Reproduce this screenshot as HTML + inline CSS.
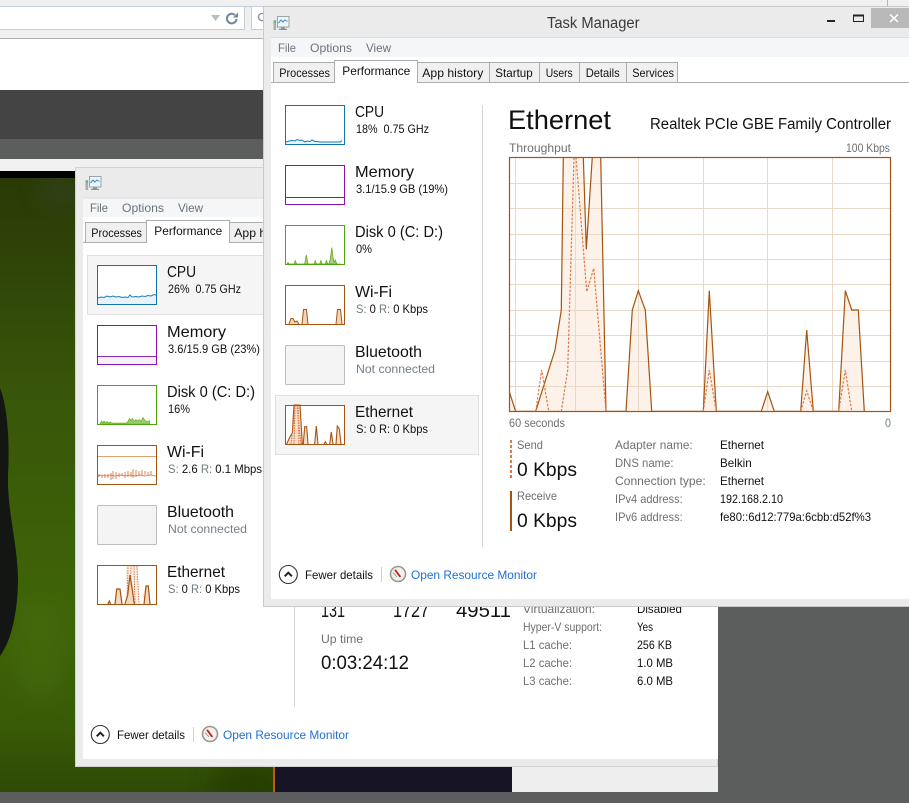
<!DOCTYPE html>
<html lang="en">
<head>
<meta charset="utf-8">
<title>Task Manager</title>
<style>
html,body{margin:0;padding:0;background:#5c5e5d;width:909px;height:803px;overflow:hidden}
svg{display:block;position:absolute;left:0;top:0}
text{font-family:"Liberation Sans",sans-serif;fill:#111}
.t{font-size:16px}
.s{font-size:12px}
.g{font-size:12px;fill:#6f6f6f}
.m{font-size:12px;fill:#6d7278}
.n{font-size:12px;fill:#71808c}
.l{font-size:12px;fill:#1f6fd6}
.b{font-size:19px}
</style>
</head>
<body>
<svg width="909" height="803" viewBox="0 0 909 803" xmlns="http://www.w3.org/2000/svg">
<defs>
<linearGradient id="gr" x1="0" y1="0" x2="0" y2="1">
<stop offset="0" stop-color="#2a3a06"/>
<stop offset=".12" stop-color="#2f4308"/>
<stop offset=".35" stop-color="#385609"/>
<stop offset=".7" stop-color="#3f6408"/>
<stop offset=".9" stop-color="#395a07"/>
<stop offset="1" stop-color="#2e4a06"/>
</linearGradient>
<filter id="bl" x="-50%" y="-50%" width="200%" height="200%"><feGaussianBlur stdDeviation="12"/></filter>
<g id="wicon">
<rect x="273.5" y="20" width="2.6" height="10" fill="#a9aeb0"/>
<rect x="273.8" y="21" width="2" height="2" fill="#5cc24a"/>
<rect x="277.5" y="16.5" width="11.5" height="10.5" fill="#eef5fa" stroke="#9aa4a9"/>
<path d="M278.5 23l2.5-3 2 2 2-2 2.5 1.5" fill="none" stroke="#2d8fd0" stroke-width="1"/>
<path d="M281 27.5h4v1.2h2v1.3h-8v-1.3h2z" fill="#8d9497"/>
</g>
<g id="chev">
<circle cx="0" cy="0" r="9" fill="#fff" stroke="#333" stroke-width="1.1"/>
<path d="M-3.6 1.8L0-1.8 3.6 1.8" fill="none" stroke="#222" stroke-width="2"/>
</g>
<g id="rmon">
<circle cx="0" cy="0" r="7.5" fill="#f2f1ee" stroke="#9a9890" stroke-width="1.6"/>
<path d="M-3-4.2L2.4 3" stroke="#c4201c" stroke-width="1.8"/>
<path d="M-5-1.5L-1 3" stroke="#8a8a8a" stroke-width=".8"/>
</g>
</defs>

<!-- browser behind -->
<rect width="909" height="803" fill="#5c5e5d"/>
<rect width="909" height="38" fill="#f0f0f0"/>
<rect x="0" y="6" width="602" height="1" fill="#c3cad0"/>
<rect x="887" y="0" width="1" height="7" fill="#b5b5b5"/>
<rect x="-2" y="6.5" width="246.5" height="23" fill="#fff" stroke="#c3ced8"/>
<rect x="251.5" y="6.5" width="30" height="23" fill="#fff" stroke="#c3ced8"/>
<path d="M211 15h9l-4.5 6z" fill="#b4bcc4"/>
<path d="M236.5 19a4.8 4.8 0 1 1-1.6-4" fill="none" stroke="#73859a" stroke-width="2"/>
<path d="M238 12.5v5h-5z" fill="#73859a"/>
<circle cx="262" cy="17" r="3.6" fill="none" stroke="#8a98a6" stroke-width="1.4"/>
<rect y="38" width="909" height="1" fill="#aeb0b0"/>
<rect y="39" width="909" height="51" fill="#fff"/>
<rect y="90" width="909" height="49" fill="#444"/>
<rect y="139" width="909" height="20" fill="#5c5e5d"/>
<rect y="159" width="909" height="12" fill="#f0f0f0"/>
<rect y="171" width="80" height="7" fill="#000"/>
<rect y="178" width="273" height="614" fill="url(#gr)"/>
<clipPath id="gc"><rect y="178" width="273" height="614"/></clipPath>
<g clip-path="url(#gc)">
<ellipse cx="62" cy="190" rx="22" ry="14" fill="#39462a" opacity=".6" filter="url(#bl)"/>
<ellipse cx="40" cy="650" rx="26" ry="50" fill="#466e08" opacity=".5" filter="url(#bl)"/>
<ellipse cx="250" cy="785" rx="40" ry="20" fill="#223804" opacity=".7" filter="url(#bl)"/>
</g>
<path d="M0 388C7 405 10 440 8 475C7 510 17 540 18 578C18 610 12 640 0 656Z" fill="#141614"/>
<rect x="273" y="767" width="2" height="25" fill="#c45a12"/>
<rect x="275" y="767" width="237" height="25" fill="#171525"/>
<rect x="512" y="767" width="206" height="25" fill="#eeeeee"/>

<!-- BACK WINDOW -->
<rect x="75.5" y="167.5" width="642" height="599" fill="#ebebeb" stroke="#d2d2d2"/>
<rect x="83" y="198" width="635" height="561" fill="#fff"/>
<rect x="83" y="198" width="635" height="19" fill="#f5f6f7"/>
<rect x="83" y="197.500" width="635" height="1" fill="#dedede"/>
<use href="#wicon" transform="translate(-188 160)"/>
<text class="m" x="90" y="212" textLength="18" lengthAdjust="spacingAndGlyphs">File</text>
<text class="m" x="122" y="212" textLength="42" lengthAdjust="spacingAndGlyphs">Options</text>
<text class="m" x="178" y="212" textLength="25" lengthAdjust="spacingAndGlyphs">View</text>
<rect x="83" y="242" width="635" height="1" fill="#adadad"/>
<rect x="85.500" y="222.500" width="61" height="20" fill="#f0f0f0" stroke="#adadad"/>
<rect x="229.500" y="222.500" width="70" height="20" fill="#f0f0f0" stroke="#adadad"/>
<rect x="146.500" y="220.500" width="83" height="22" fill="#fff" stroke="#adadad"/>
<rect x="147" y="241" width="82" height="3" fill="#fff"/>
<text class="s" x="91.300" y="237" textLength="50.700" lengthAdjust="spacingAndGlyphs">Processes</text>
<text class="s" x="154.300" y="235" textLength="68" lengthAdjust="spacingAndGlyphs">Performance</text>
<text class="s" x="234.300" y="237" textLength="61" lengthAdjust="spacingAndGlyphs">App history</text>
<rect x="87.500" y="255.500" width="190" height="59" fill="#f5f5f5" stroke="#e0e0e0"/>

<!-- back thumbs -->
<rect x="97.500" y="265.500" width="59" height="39" fill="#fff"/>
<path d="M98 298l3-1 3 .5 3-1.500 3 1 3-1 3 1 3-.5 3 1 3-.5 3 .5 2-2.500 2 2 4-.5 3 .5 3-1 3 .5 3-1 3 .5 3-1.500 2 .5V304H98z" fill="#e8f2f9" stroke="none"/>
<path d="M98 298l3-1 3 .5 3-1.500 3 1 3-1 3 1 3-.5 3 1 3-.5 3 .5 2-2.500 2 2 4-.5 3 .5 3-1 3 .5 3-1 3 .5 3-1.500 2 .5" fill="none" stroke="#1d7cb5"/>
<rect x="97.500" y="265.500" width="59" height="39" fill="none" stroke="#1174b0" stroke-width="1"/>
<rect x="97.500" y="325.500" width="59" height="39" fill="#fff"/>
<rect x="98" y="356" width="58" height="8" fill="#f5f0f7"/>
<rect x="98" y="356" width="58" height="1" fill="#8b2aa8"/>
<rect x="97.500" y="325.500" width="59" height="39" fill="none" stroke="#8b12ae"/>
<rect x="97.500" y="385.500" width="59" height="39" fill="#fff"/>
<path d="M100 424l1.500-3 1.500 2 1-2 1.500 2 1.500-1.500 1.500 1.500 1.500-1 1.500 1h6l1 0 3 0 5 0 1.500-1.500 1.500-3 1.500 2 1.500-2 1.500 3 2-2 1.500 1.500 2-1.500 1.500 2 2-4 2 3 2 1 1.500-.5 1-.5V424z" fill="#9ecb6e" stroke="#5ba60f" stroke-width=".6"/>
<rect x="97.500" y="385.500" width="59" height="39" fill="none" stroke="#4da60c"/>
<rect x="97.500" y="445.500" width="59" height="39" fill="#fff"/>
<rect x="98" y="456" width="58" height="1" fill="#d9a470"/>
<path d="M99 477v-3m3 4v-3m3 3v-4m3 4v-4m3 6v-7m2 6v-8m3 8v-7m3 5v-4m3 3v-3m3 5v-6m3 5v-6m3 6v-5m2 6v-9m3 8v-7m3 6v-5m3 5v-6m3 5v-4m3 4v-3m3 3v-4" stroke="#dd8550" stroke-width="1" fill="none"/>
<path d="M98 476l4-1 4 1 4-1 5 1 5-1 5 1 5-1 5 1 5-1 5 1 5-1 6 1" stroke="#c47a40" fill="none" stroke-width=".8"/>
<rect x="97.500" y="445.500" width="59" height="39" fill="none" stroke="#a5540e"/>
<rect x="97.500" y="505.500" width="59" height="39" rx="1" fill="#f4f4f4" stroke="#bdbdbd"/>
<rect x="97.500" y="565.500" width="59" height="39" fill="#fff"/>
<path d="M126 604.500V566h12v38.500z" fill="#fbeee3"/>
<path d="M127 604l1-38M137 566l2 38M130 604l1-38M134 566l1 38" fill="none" stroke="#dd7a48" stroke-dasharray="1.500 1"/>
<path d="M108 604l1.300-3 1.300 3M115 604l1.700-15h3.300l2 15M125 604l2.700-9 2.300-20 2.300 15 2 14M144 604l2-18h2.300l1.700 18" fill="#f3d9c2" stroke="#a5540e" stroke-width="1.200"/>
<rect x="97.500" y="565.500" width="59" height="39" fill="none" stroke="#a5540e"/>

<!-- back labels -->
<text class="t" x="167" y="277" textLength="29" lengthAdjust="spacingAndGlyphs">CPU</text>
<text class="s" x="168" y="293" textLength="73" lengthAdjust="spacingAndGlyphs">26%&#160; 0.75 GHz</text>
<text class="t" x="167" y="337" textLength="59" lengthAdjust="spacingAndGlyphs">Memory</text>
<text class="s" x="168" y="353" textLength="92" lengthAdjust="spacingAndGlyphs">3.6/15.9 GB (23%)</text>
<text class="t" x="167" y="397" textLength="88" lengthAdjust="spacingAndGlyphs">Disk 0 (C: D:)</text>
<text class="s" x="168" y="413" textLength="22" lengthAdjust="spacingAndGlyphs">16%</text>
<text class="t" x="167" y="457" textLength="37" lengthAdjust="spacingAndGlyphs">Wi-Fi</text>
<text class="s" x="168" y="473" textLength="94" lengthAdjust="spacingAndGlyphs"><tspan style="fill:#6f7a80">S:</tspan> 2.6 <tspan style="fill:#6f7a80">R:</tspan> 0.1 Mbps</text>
<text class="t" x="167" y="517" textLength="67" lengthAdjust="spacingAndGlyphs">Bluetooth</text>
<text class="n" x="168" y="533" textLength="79" lengthAdjust="spacingAndGlyphs">Not connected</text>
<text class="t" x="167" y="577" textLength="58" lengthAdjust="spacingAndGlyphs">Ethernet</text>
<text class="s" x="168" y="593" textLength="72" lengthAdjust="spacingAndGlyphs"><tspan style="fill:#6f7a80">S:</tspan> 0 <tspan style="fill:#6f7a80">R:</tspan> 0 Kbps</text>

<rect x="294" y="590" width="1" height="117" fill="#d4d4d4"/>
<text class="b" x="321" y="617" textLength="24" lengthAdjust="spacingAndGlyphs">131</text>
<text class="b" x="393" y="617" textLength="36" lengthAdjust="spacingAndGlyphs">1727</text>
<text class="b" x="456" y="617" textLength="55" lengthAdjust="spacingAndGlyphs">49511</text>
<text class="g" x="321" y="643" textLength="42" lengthAdjust="spacingAndGlyphs">Up time</text>
<text class="b" x="321" y="669" textLength="88" lengthAdjust="spacingAndGlyphs">0:03:24:12</text>
<text class="g" x="523" y="613" textLength="72" lengthAdjust="spacingAndGlyphs">Virtualization:</text>
<text class="s" x="637" y="613" textLength="45" lengthAdjust="spacingAndGlyphs">Disabled</text>
<text class="g" x="523" y="631" textLength="79" lengthAdjust="spacingAndGlyphs">Hyper-V support:</text>
<text class="s" x="637" y="631" textLength="16" lengthAdjust="spacingAndGlyphs">Yes</text>
<text class="g" x="523" y="649" textLength="49" lengthAdjust="spacingAndGlyphs">L1 cache:</text>
<text class="s" x="637" y="649" textLength="35" lengthAdjust="spacingAndGlyphs">256 KB</text>
<text class="g" x="523" y="667" textLength="49" lengthAdjust="spacingAndGlyphs">L2 cache:</text>
<text class="s" x="637" y="667" textLength="36" lengthAdjust="spacingAndGlyphs">1.0 MB</text>
<text class="g" x="523" y="685" textLength="49" lengthAdjust="spacingAndGlyphs">L3 cache:</text>
<text class="s" x="637" y="685" textLength="36" lengthAdjust="spacingAndGlyphs">6.0 MB</text>

<use href="#chev" transform="translate(100.300 734.500)"/>
<text class="s" x="117" y="739" textLength="68" lengthAdjust="spacingAndGlyphs">Fewer details</text>
<rect x="193" y="727" width="1" height="15" fill="#cfcfcf"/>
<use href="#rmon" transform="translate(210 734)"/>
<text class="l" x="223" y="739" textLength="126" lengthAdjust="spacingAndGlyphs">Open Resource Monitor</text>

<!-- FRONT WINDOW -->
<rect x="263.500" y="6.500" width="660" height="600" fill="#ebebeb" stroke="#cacaca"/>
<rect x="271" y="38" width="640" height="561" fill="#fff"/>
<rect x="271" y="38" width="640" height="19" fill="#f5f6f7"/>
<rect x="271" y="37" width="640" height="1" fill="#dedede"/>
<use href="#wicon"/>
<text x="547" y="28" style="font-size:15.500px;fill:#3a3a3a" textLength="92.500" lengthAdjust="spacingAndGlyphs">Task Manager</text>
<rect x="827" y="20" width="8" height="2" fill="#222"/>
<rect x="853.500" y="15.500" width="10" height="6" fill="none" stroke="#222"/>
<rect x="853" y="14.500" width="11" height="2" fill="#222"/>
<rect x="871" y="8" width="38" height="20" fill="#b9b9b9"/>
<path d="M890 14.500l8 7.500m0-7.500l-8 7.500" stroke="#fff" stroke-width="1.500"/>
<text class="m" x="278" y="52" textLength="18" lengthAdjust="spacingAndGlyphs">File</text>
<text class="m" x="310" y="52" textLength="42" lengthAdjust="spacingAndGlyphs">Options</text>
<text class="m" x="366" y="52" textLength="25" lengthAdjust="spacingAndGlyphs">View</text>

<rect x="271" y="82" width="640" height="1" fill="#adadad"/>
<rect x="273.500" y="62.500" width="61" height="20" fill="#f0f0f0" stroke="#adadad"/>
<rect x="417.500" y="62.500" width="72" height="20" fill="#f0f0f0" stroke="#adadad"/>
<rect x="489.500" y="62.500" width="50" height="20" fill="#f0f0f0" stroke="#adadad"/>
<rect x="539.500" y="62.500" width="40" height="20" fill="#f0f0f0" stroke="#adadad"/>
<rect x="579.500" y="62.500" width="47" height="20" fill="#f0f0f0" stroke="#adadad"/>
<rect x="626.500" y="62.500" width="51" height="20" fill="#f0f0f0" stroke="#adadad"/>
<rect x="334.500" y="60.500" width="83" height="22" fill="#fff" stroke="#adadad"/>
<rect x="335" y="81" width="82" height="3" fill="#fff"/>
<text class="s" x="279.300" y="77" textLength="50.700" lengthAdjust="spacingAndGlyphs">Processes</text>
<text class="s" x="342.300" y="75" textLength="68" lengthAdjust="spacingAndGlyphs">Performance</text>
<text class="s" x="422.300" y="77" textLength="61" lengthAdjust="spacingAndGlyphs">App history</text>
<text class="s" x="495.300" y="77" textLength="37.400" lengthAdjust="spacingAndGlyphs">Startup</text>
<text class="s" x="545.700" y="77" textLength="27" lengthAdjust="spacingAndGlyphs">Users</text>
<text class="s" x="585.700" y="77" textLength="34" lengthAdjust="spacingAndGlyphs">Details</text>
<text class="s" x="632.300" y="77" textLength="41.700" lengthAdjust="spacingAndGlyphs">Services</text>

<!-- front sidebar -->
<rect x="275.500" y="395.500" width="203" height="59" fill="#f5f5f5" stroke="#e0e0e0"/>
<rect x="482" y="105" width="1" height="442" fill="#d6d6d6"/>

<rect x="285.500" y="105.500" width="59" height="39" fill="#fff"/>
<path d="M286 142l3-1 3-.5 3 .5 2-1.500 3 1 2-.5 3 2 2-1 3 .5 2-1.500 3 1.500 2 0 3 .5 20 0 2-1.500V144H286z" fill="#e8f2f9"/>
<path d="M286 142l3-1 3-.5 3 .5 2-1.500 3 1 2-.5 3 2 2-1 3 .5 2-1.500 3 1.500 2 0 3 .5 20 0 2-1.500" fill="none" stroke="#1d7cb5"/>
<rect x="285.500" y="105.500" width="59" height="39" fill="none" stroke="#1174b0"/>
<rect x="285.500" y="165.500" width="59" height="39" fill="#fff"/>
<rect x="286" y="197" width="58" height="1" fill="#8b12ae"/>
<rect x="285.500" y="165.500" width="59" height="39" fill="none" stroke="#8b12ae"/>
<rect x="285.500" y="225.500" width="59" height="39" fill="#fff"/>
<path d="M287 264l1-1.500 1 1.500 5 0 1.300-3.500 1.300 3.500h8l1.700-9 1.700 9h6l1.300-3.500 1.300 3.500h3l1.300-3.500 1.300 3.500h3l1.300-3.500 1.300 3.500h1l1.500-5 1.500-11.500 1.500 12 1 3 1-2.500 1.500 4h4z" fill="#a8d07c" stroke="#5ba60f" stroke-width=".7"/>
<rect x="285.500" y="225.500" width="59" height="39" fill="none" stroke="#4da60c"/>
<rect x="285.500" y="285.500" width="59" height="39" fill="#fff"/>
<path d="M289 324l2-5.500h2l2 3.500 2-1 2 3M302 324l1.500-14.500h3L308 324M336 324l1.500-14.500h3L342 324" fill="#f0d4bc" stroke="#a5540e"/>
<rect x="285.500" y="285.500" width="59" height="39" fill="none" stroke="#a5540e"/>
<rect x="285.500" y="345.500" width="59" height="39" rx="1" fill="#f4f4f4" stroke="#bdbdbd"/>
<rect x="285.500" y="405.500" width="59" height="39" fill="#fff"/>
<path d="M286.700 444l3.300-7.300 2.300-3.700 1.700-28h6l2.300 39M303.300 444l1.400-17.300h2l1.300 17.300M314.700 444l1.600-18 1.700 18M324 444l1.300-2.300 1.400 2.300M329.700 444l1.600-12 1.700 12M336 444l1.300-18 2 3 1.700 15" fill="#f5dfcc" stroke="#a5540e" stroke-width="1.100"/>
<path d="M291 444l3-26 1-13M297 405l2 20 2 19M294 444l1-39M298 405l1 39" fill="none" stroke="#dd6a38" stroke-dasharray="1.500 1"/>
<rect x="285.500" y="405.500" width="59" height="39" fill="none" stroke="#a5540e"/>

<text class="t" x="355" y="117" textLength="29" lengthAdjust="spacingAndGlyphs">CPU</text>
<text class="s" x="356" y="133" textLength="73" lengthAdjust="spacingAndGlyphs">18%&#160; 0.75 GHz</text>
<text class="t" x="355" y="177" textLength="59" lengthAdjust="spacingAndGlyphs">Memory</text>
<text class="s" x="356" y="193" textLength="92" lengthAdjust="spacingAndGlyphs">3.1/15.9 GB (19%)</text>
<text class="t" x="355" y="237" textLength="88" lengthAdjust="spacingAndGlyphs">Disk 0 (C: D:)</text>
<text class="s" x="356" y="253" textLength="16" lengthAdjust="spacingAndGlyphs">0%</text>
<text class="t" x="355" y="297" textLength="37" lengthAdjust="spacingAndGlyphs">Wi-Fi</text>
<text class="s" x="356" y="313" textLength="72" lengthAdjust="spacingAndGlyphs"><tspan style="fill:#6f7a80">S:</tspan> 0 <tspan style="fill:#6f7a80">R:</tspan> 0 Kbps</text>
<text class="t" x="355" y="357" textLength="67" lengthAdjust="spacingAndGlyphs">Bluetooth</text>
<text class="n" x="356" y="373" textLength="79" lengthAdjust="spacingAndGlyphs">Not connected</text>
<text class="t" x="355" y="417" textLength="58" lengthAdjust="spacingAndGlyphs">Ethernet</text>
<text class="s" x="356" y="433" textLength="72" lengthAdjust="spacingAndGlyphs">S: 0 R: 0 Kbps</text>

<!-- main panel -->
<text x="508" y="129" style="font-size:27px" textLength="103" lengthAdjust="spacingAndGlyphs">Ethernet</text>
<text x="650" y="129" style="font-size:15.500px" textLength="241" lengthAdjust="spacingAndGlyphs">Realtek PCIe GBE Family Controller</text>
<text class="g" x="509" y="152" textLength="62" lengthAdjust="spacingAndGlyphs">Throughput</text>
<text class="g" x="846" y="152" textLength="44" lengthAdjust="spacingAndGlyphs">100 Kbps</text>

<!-- chart -->
<clipPath id="cc"><rect x="509" y="157" width="382" height="255"/></clipPath>
<g clip-path="url(#cc)">
<path d="M509.300 411.300V391.700L515.600 411.300H535.700L555 350 561.300 310 563.300 157H583.300L586.300 249.300 592.300 157H600.700L606 411.300H626L632.300 310 638.300 290.700 645.300 310 651.700 411.300H703.300L709.300 290.700 716.300 411.300H761.300L767.700 391.700 774.300 411.300H800.700L806.700 330 813.300 411.300H838.700L845.300 290.700 851.700 310H858.300L864.300 411.300Z" fill="#fcf2e9"/>
</g>
<g stroke="#ead9c7" stroke-width="1">
<path d="M510 183.500H890M510 208.500H890M510 234.500H890M510 259.500H890M510 284.500H890M510 310.500H890M510 335.500H890M510 361.500H890M510 386.500H890"/>
<path d="M515.500 158V411M575.500 158V411M638.500 158V411M703.500 158V411M767.500 158V411M832.500 158V411"/>
</g>
<g clip-path="url(#cc)">
<path d="M509.300 391.700L515.600 411.300H535.700L555 350 561.300 310 563.300 157M583.300 157L586.300 249.300 592.300 157M600.700 157L606 411.300H626L632.300 310 638.300 290.700 645.300 310 651.700 411.300H703.300L709.300 290.700 716.300 411.300H761.300L767.700 391.700 774.300 411.300H800.700L806.700 330 813.300 411.300H838.700L845.300 290.700 851.700 310H858.300L864.300 411.300" fill="none" stroke="#a5540e" stroke-width="1.200"/>
<path d="M535.700 411.300L541.700 370 548.700 411.300H561.300L567.700 370 574 157M576 157L586.700 291.700 593.700 268.300 606 411.300M703.300 411.300L709.300 370 716.300 411.300M800.700 411.300L806.700 390.700 813.300 411.300M838.700 411.300L845.300 370 851.700 411.300" fill="none" stroke="#e07b4a" stroke-width="1.200" stroke-dasharray="2.500 1.500"/>
</g>
<rect x="509.500" y="157.500" width="381" height="254" fill="none" stroke="#a5540e" stroke-width="1.200"/>
<text class="g" x="509" y="427" textLength="56" lengthAdjust="spacingAndGlyphs">60 seconds</text>
<text class="n" x="885" y="427" textLength="6" lengthAdjust="spacingAndGlyphs">0</text>

<!-- send / receive -->
<path d="M511 440V479" stroke="#e07b4a" stroke-width="2" stroke-dasharray="3 2"/>
<rect x="510" y="491" width="2" height="40" fill="#a5540e"/>
<text class="g" x="517" y="449" textLength="26" lengthAdjust="spacingAndGlyphs">Send</text>
<text class="b" x="517" y="476" textLength="60" lengthAdjust="spacingAndGlyphs">0 Kbps</text>
<text class="g" x="517" y="500" textLength="40" lengthAdjust="spacingAndGlyphs">Receive</text>
<text class="b" x="517" y="527" textLength="60" lengthAdjust="spacingAndGlyphs">0 Kbps</text>

<text class="g" x="615" y="449" textLength="77.700" lengthAdjust="spacingAndGlyphs">Adapter name:</text>
<text class="g" x="615" y="467" textLength="58.500" lengthAdjust="spacingAndGlyphs">DNS name:</text>
<text class="g" x="615" y="485" textLength="90.700" lengthAdjust="spacingAndGlyphs">Connection type:</text>
<text class="g" x="615" y="503" textLength="67.700" lengthAdjust="spacingAndGlyphs">IPv4 address:</text>
<text class="g" x="615" y="521" textLength="67.700" lengthAdjust="spacingAndGlyphs">IPv6 address:</text>
<text class="s" x="720" y="449" textLength="44" lengthAdjust="spacingAndGlyphs">Ethernet</text>
<text class="s" x="720" y="467" textLength="31.700" lengthAdjust="spacingAndGlyphs">Belkin</text>
<text class="s" x="720" y="485" textLength="44" lengthAdjust="spacingAndGlyphs">Ethernet</text>
<text class="s" x="720" y="503" textLength="63" lengthAdjust="spacingAndGlyphs">192.168.2.10</text>
<text class="s" x="720" y="521" textLength="151" lengthAdjust="spacingAndGlyphs">fe80::6d12:779a:6cbb:d52f%3</text>

<use href="#chev" transform="translate(288.300 574.500)"/>
<text class="s" x="305" y="579" textLength="68" lengthAdjust="spacingAndGlyphs">Fewer details</text>
<rect x="381" y="567" width="1" height="15" fill="#cfcfcf"/>
<use href="#rmon" transform="translate(398 574)"/>
<text class="l" x="411" y="579" textLength="126" lengthAdjust="spacingAndGlyphs">Open Resource Monitor</text>
</svg>
</body>
</html>
